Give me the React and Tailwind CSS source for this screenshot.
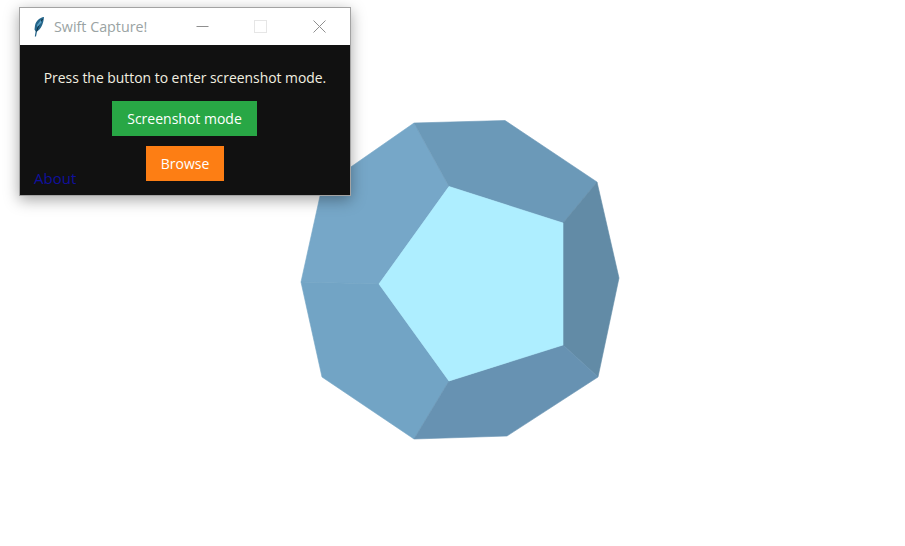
export default function App() {
  return (
    <div className="relative w-[905px] h-[546px] bg-white overflow-hidden font-['Open_Sans','Noto_Sans',sans-serif]">
      <svg className="absolute left-0 top-0" width="905" height="546" viewBox="0 0 905 546">
        <polygon points="414,123 322,187 301,282 379,284 449,186.5" fill="#76a7c8" stroke="#76a7c8" strokeWidth="0.6" strokeLinejoin="round" />
        <polygon points="301,282 322,377 414,439 449,381 379,284" fill="#72a4c5" stroke="#72a4c5" strokeWidth="0.6" strokeLinejoin="round" />
        <polygon points="414,123 505,120.5 597,182 563,223 449,186.5" fill="#6b99b8" stroke="#6b99b8" strokeWidth="0.6" strokeLinejoin="round" />
        <polygon points="597,182 619,278 598,377 563,345 563,223" fill="#628ba6" stroke="#628ba6" strokeWidth="0.6" strokeLinejoin="round" />
        <polygon points="563,345 598,377 507,436 414,439 449,381" fill="#6792b2" stroke="#6792b2" strokeWidth="0.6" strokeLinejoin="round" />
        <polygon points="449,186.5 563,223 563,345 449,381 379,284" fill="#aeeeff" stroke="#aeeeff" strokeWidth="0.6" strokeLinejoin="round" />
      </svg>
      <div className="absolute left-[19px] top-[7px] w-[332px] h-[189px] border border-[#a3a3a3] shadow-[0_4px_14px_rgba(0,0,0,0.35)] flex flex-col">
        <div className="h-[37px] bg-white flex items-center shrink-0">
          <svg className="ml-[13px] shrink-0" width="12" height="22" viewBox="0 0 12 22">
            <path d="M11 1 C6.5 1.5 3 5 2 9.5 L1.5 13.5 L2.6 15.5 L1.8 20.5 L3 20.5 L4 15.5 C7.5 13.5 10.5 8 11 1 Z" fill="#24658a" />
            <path d="M9.5 3 C7.5 6 5 10.5 3.6 15.5" stroke="#0d2c3f" strokeWidth="1" fill="none" />
            <path d="M8 4 L4 9 L4.5 11 L8.5 6.5 Z" fill="#5aa0c4" />
          </svg>
          <span className="ml-[9px] text-[14.3px] text-[#9aa3a3] whitespace-nowrap">Swift Capture!</span>
          <div className="ml-auto flex items-center">
            <svg width="13" height="13" viewBox="0 0 13 13" className="mr-[45px]"><path d="M0.5 6.5H12.5" stroke="#8f8f8f" strokeWidth="1" /></svg>
            <svg width="13" height="13" viewBox="0 0 13 13" className="mr-[46px]"><rect x="0.5" y="0.5" width="12" height="12" fill="none" stroke="#e6e6e6" /></svg>
            <svg width="13" height="13" viewBox="0 0 13 13" className="mr-[24px]"><path d="M0.5 0.5L12.5 12.5M12.5 0.5L0.5 12.5" stroke="#8f8f8f" strokeWidth="1" /></svg>
          </div>
        </div>
        <div className="relative flex-1 bg-[#111111] flex flex-col items-center pt-[23px]">
          <p className="text-[13.9px] leading-[20px] text-[#f2efe0] whitespace-nowrap">Press the button to enter screenshot mode.</p>
          <div className="mt-[13px] mr-[1px] w-[145px] h-[35px] bg-[#28a745] text-white text-[14px] flex items-center justify-center">Screenshot mode</div>
          <div className="mt-[10px] w-[78px] h-[35px] bg-[#fd7e14] text-white text-[14px] flex items-center justify-center">Browse</div>
          <span className="absolute left-[14px] top-[123px] text-[15px] leading-[20px] text-[#10109c]">About</span>
        </div>
      </div>
    </div>
  );
}
